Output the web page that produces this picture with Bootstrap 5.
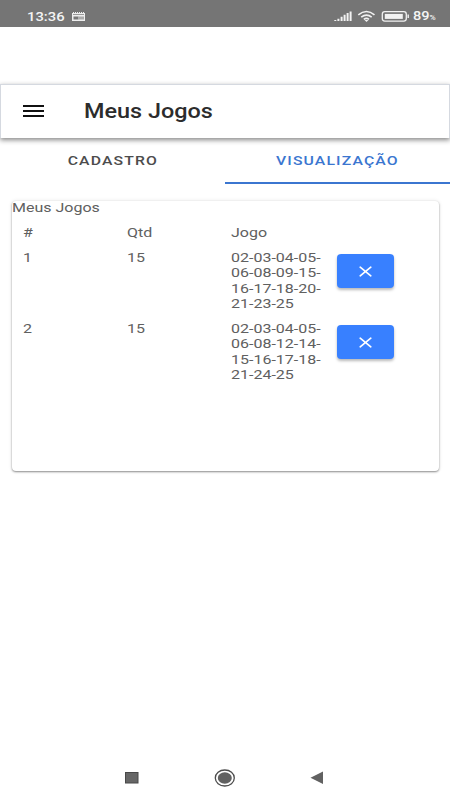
<!DOCTYPE html>
<html lang="pt-BR">
<head>
<meta charset="utf-8">
<meta name="viewport" content="width=device-width, initial-scale=1">
<title>Meus Jogos</title>
<link href="https://cdn.jsdelivr.net/npm/bootstrap@5.3.0/dist/css/bootstrap.min.css" rel="stylesheet">
<style>
body{font-family:Roboto,"Liberation Sans",sans-serif;font-size:13.4px;line-height:15.4px;color:#606060;background:#fff;height:800px;overflow:hidden}
.wide{display:inline-block;transform:scaleX(1.195);transform-origin:left center;white-space:nowrap}
.status-bar{height:27px;background:#757575;color:#f4f4f4;padding:6px 15px 0 27px;flex:none}
.status-bar .clock{font-size:12.4px;font-weight:500;width:45px;padding-top:3px}
.status-bar .pct{font-size:12.2px;font-weight:500;width:22px;padding-top:3px}
.status-bar .pct small{font-size:7px}
.app-header{margin-top:57px;height:54px;border:1px solid #d5d9e0;border-bottom:0;box-shadow:0 2px 5px rgba(0,0,0,.48);padding:0 0 2px 22px;flex:none;position:relative}
.app-title{font-size:19.6px;line-height:24px;font-weight:500;color:#2c2c2c;margin:2px 0 0 39px}
.tab-strip{height:46px;flex:none}
.tab-strip .nav-link{height:46px;padding:1px 0 0;border-radius:0;border-bottom:2px solid transparent;color:#4c4c4c;font-weight:500;font-size:13.2px;display:flex;align-items:center;justify-content:center}
.tab-strip .nav-link.active{color:#3b76d0;border-color:#3b76d0}
.tab-strip .wide{transform-origin:center;letter-spacing:.95px}
.games{margin:17px 11px 0 12px;height:270px;border:0;border-radius:4px;box-shadow:0 1px 2px rgba(0,0,0,.42),0 0 4px rgba(0,0,0,.1);color:inherit;flex:none}
.games-caption{height:15px;margin-left:-.5px;margin-top:-1px}
.games-grid{padding:5px 6px 0 5px}
.games-grid .col{padding:5px 6px}
.games-grid .row{height:71px}
.games-grid .row:first-child{height:25px}
.btn-remove{width:57px;height:34px;margin-top:4px;margin-left:2px;border:0;border-radius:4px;background:#3880ff;box-shadow:0 2px 3px rgba(0,0,0,.28);padding:0}
.btn-remove:hover{background:#4c8dff}
.android-nav{height:45px;padding:0 126px 0 124px;flex:none}
</style>
</head>
<body class="d-flex flex-column">
<div class="status-bar d-flex align-items-start">
  <div class="clock"><span class="wide">13:36</span></div>
  <svg width="13" height="10" viewBox="0 0 13 10" style="margin-top:5.5px"><path d="M0 1h1V0h1v1h1V0h1v1h1V0h1v1h1V0h1v1h1V0h1v1h1V0h1v1h1v8H0Z" fill="#eee"/><path d="M1 2.5h11" stroke="#999" stroke-width="1"/><path d="M1.5 4.5h5v3h-5Z" fill="#777"/><path d="M6.5 4.5H12v3H6.5Z" fill="#aaa"/></svg>
  <svg class="ms-auto" width="76" height="14" viewBox="0 0 76 14" style="margin-top:3px;margin-right:4px" fill="none" stroke="#f2f2f2">
    <path d="M2.3 12v-1M5.4 12V9.8M8.6 12V7.8M11.6 12V5.8M14.6 12V4M17.6 12V2.4" stroke-width="2"/>
    <path d="M25.3 5.8Q33.5-.8 41.5 5.8M28.2 8.2Q33.5 4 38.7 8.2M30.8 10.3Q33.5 8.4 36 10.3" stroke-width="1.6"/><path d="m31.5 11 2 2 2-2Z" fill="#f2f2f2" stroke="none"/>
    <rect x="49.3" y="2.7" width="24" height="9.4" rx="2.5" stroke-width="1.3"/><path d="M51.8 4.9h18v5h-18Z" fill="#f2f2f2" stroke="none"/><path d="M75.2 5.5v3.5" stroke-width="1.4"/>
  </svg>
  <div class="pct"><span class="wide">89<small>%</small></span></div>
</div>

<header class="app-header d-flex align-items-center">
  <svg width="22" height="12" viewBox="0 0 22 12" stroke="#111" stroke-width="1.8"><path d="M0 1h21M0 6h21M0 11h21"/></svg>
  <h1 class="app-title"><span class="wide">Meus Jogos</span></h1>
</header>

<ul class="nav nav-fill tab-strip flex-nowrap">
  <li class="nav-item w-50"><a class="nav-link" href="#"><span class="wide">CADASTRO</span></a></li>
  <li class="nav-item w-50"><a class="nav-link active" href="#"><span class="wide">VISUALIZAÇÃO</span></a></li>
</ul>

<main class="card games">
  <div class="games-caption"><span class="wide">Meus Jogos</span></div>
  <div class="games-grid">
    <div class="row g-0">
      <div class="col"><span class="wide">#</span></div>
      <div class="col"><span class="wide">Qtd</span></div>
      <div class="col"><span class="wide">Jogo</span></div>
      <div class="col"></div>
    </div>
    <div class="row g-0">
      <div class="col"><span class="wide">1</span></div>
      <div class="col"><span class="wide">15</span></div>
      <div class="col"><span class="wide">02-03-04-05-<br>06-08-09-15-<br>16-17-18-20-<br>21-23-25</span></div>
      <div class="col"><button class="btn btn-primary btn-remove d-flex align-items-center justify-content-center" aria-label="Remover"><svg width="13" height="11" viewBox="0 0 13 11" stroke="#fff" stroke-width="1.7" stroke-linecap="round"><path d="m1.2 1.2 10.6 8.6M11.8 1.2 1.2 9.8"/></svg></button></div>
    </div>
    <div class="row g-0">
      <div class="col"><span class="wide">2</span></div>
      <div class="col"><span class="wide">15</span></div>
      <div class="col"><span class="wide">02-03-04-05-<br>06-08-12-14-<br>15-16-17-18-<br>21-24-25</span></div>
      <div class="col"><button class="btn btn-primary btn-remove d-flex align-items-center justify-content-center" aria-label="Remover"><svg width="13" height="11" viewBox="0 0 13 11" stroke="#fff" stroke-width="1.7" stroke-linecap="round"><path d="m1.2 1.2 10.6 8.6M11.8 1.2 1.2 9.8"/></svg></button></div>
    </div>
  </div>
</main>

<nav class="android-nav d-flex align-items-center justify-content-between mt-auto">
  <svg width="15" height="12" viewBox="0 0 15 12"><rect x="1.5" y=".5" width="12.5" height="10.5" fill="#666" stroke="#484848"/></svg>
  <svg width="21" height="18" viewBox="0 0 21 18"><ellipse cx="10.8" cy="9" rx="9.5" ry="8" fill="none" stroke="#4c4c4c" stroke-width="1.3"/><ellipse cx="10.8" cy="9" rx="7" ry="5.8" fill="#616161"/></svg>
  <svg width="14" height="13" viewBox="0 0 14 13"><path d="M.5 6.8 13 .5v12.5Z" fill="#616161"/></svg>
</nav>
<script src="https://cdn.jsdelivr.net/npm/bootstrap@5.3.0/dist/js/bootstrap.bundle.min.js"></script>
</body>
</html>
